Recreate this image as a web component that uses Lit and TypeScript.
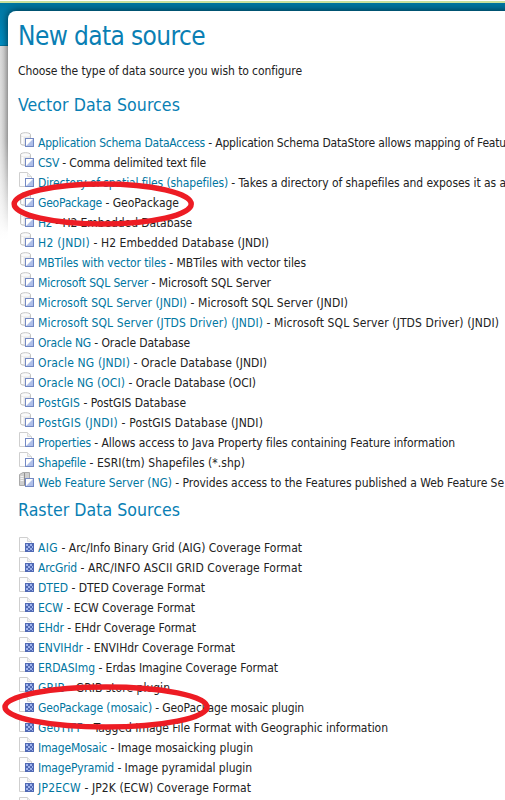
import { LitElement, html, css, svg } from "lit";
import { customElement, property } from "lit/decorators.js";

type Kind = "db" | "page" | "server" | "raster";
// kind, link name, description, right edge of the link, right edge of the description
type Row = [Kind, string, string, number, number];

const VECTOR: Row[] = [
  ["db", "Application Schema DataAccess", "Application Schema DataStore allows mapping of Featu", 205, 506],
  ["db", "CSV", "Comma delimited text file", 59, 206],
  ["page", "Directory of spatial files (shapefiles)", "Takes a directory of shapefiles and exposes it as a", 228, 506],
  ["db", "GeoPackage", "GeoPackage", 102, 179],
  ["db", "H2", "H2 Embedded Database", 52, 192],
  ["db", "H2 (JNDI)", "H2 Embedded Database (JNDI)", 90, 269],
  ["db", "MBTiles with vector tiles", "MBTiles with vector tiles", 166, 306],
  ["db", "Microsoft SQL Server", "Microsoft SQL Server", 148, 271],
  ["db", "Microsoft SQL Server (JNDI)", "Microsoft SQL Server (JNDI)", 187, 348],
  ["db", "Microsoft SQL Server (JTDS Driver) (JNDI)", "Microsoft SQL Server (JTDS Driver) (JNDI)", 263, 499],
  ["db", "Oracle NG", "Oracle Database", 91, 190],
  ["db", "Oracle NG (JNDI)", "Oracle Database (JNDI)", 130, 267],
  ["db", "Oracle NG (OCI)", "Oracle Database (OCI)", 125, 256],
  ["db", "PostGIS", "PostGIS Database", 80, 186],
  ["db", "PostGIS (JNDI)", "PostGIS Database (JNDI)", 118, 263],
  ["page", "Properties", "Allows access to Java Property files containing Feature information", 91, 455],
  ["page", "Shapefile", "ESRI(tm) Shapefiles (*.shp)", 86, 245],
  ["server", "Web Feature Server (NG)", "Provides access to the Features published a Web Feature Se", 172, 504],
];
const RASTER: Row[] = [
  ["raster", "AIG", "Arc/Info Binary Grid (AIG) Coverage Format", 58, 302],
  ["raster", "ArcGrid", "ARC/INFO ASCII GRID Coverage Format", 77, 302],
  ["raster", "DTED", "DTED Coverage Format", 68, 205],
  ["raster", "ECW", "ECW Coverage Format", 63, 195],
  ["raster", "EHdr", "EHdr Coverage Format", 64, 196],
  ["raster", "ENVIHdr", "ENVIHdr Coverage Format", 83, 235],
  ["raster", "ERDASImg", "Erdas Imagine Coverage Format", 95, 278],
  ["raster", "GRIB", "GRIB store plugin", 65, 170],
  ["raster", "GeoPackage (mosaic)", "GeoPackage mosaic plugin", 152, 304],
  ["raster", "GeoTIFF", "Tagged Image File Format with Geographic information", 83, 388],
  ["raster", "ImageMosaic", "Image mosaicking plugin", 107, 253],
  ["raster", "ImagePyramid", "Image pyramidal plugin", 114, 252],
  ["raster", "JP2ECW", "JP2K (ECW) Coverage Format", 81, 251],
];

/* One run of text whose tracking is adjusted to fill a given width. */
@customElement("fit-text")
class FitText extends LitElement {
  @property() text = "";
  @property({ type: Number }) width = 0;
  static styles = css`
    :host { display: inline-block; white-space: pre; }
  `;
  render() { return html`<span>${this.text}</span>`; }
  updated() {
    const s = this.renderRoot.querySelector("span")!;
    s.style.letterSpacing = "0";
    const w = s.getBoundingClientRect().width;
    s.style.letterSpacing = (this.width - w) / this.text.length + "px";
  }
}

@customElement("source-icon")
class SourceIcon extends LitElement {
  @property() kind: Kind = "db";
  static styles = css`
    :host { display: block; width: 16px; height: 16px; }
    svg { display: block; }
  `;
  render() {
    const page = svg`<path d="M.5 .5H8.5L12.5 4.5V14.5H.5Z" fill="#fdfdfd" stroke="#cfcfcf"/><path d="M8.5 .5V4.5H12.5" fill="#f1f1f1" stroke="#dadada"/>`;
    const db = svg`<path d="M1.5 2.5C1.5 .2 11.5 .2 11.5 2.5V11.5C11.5 14 1.5 14 1.5 11.5Z" fill="#e6e6e6" stroke="#c3c3c3"/><ellipse cx="6.5" cy="2.9" rx="4.4" ry="1.7" fill="#fafafa"/><path d="M3.5 5V12" stroke="#fff" stroke-width="2"/>`;
    const server = svg`<path d="M.5 2.5L4 .5H10.5V12.5L8 13.5H.5Z" fill="#cfcfcf" stroke="#aaa"/><path d="M5.5 1V13" stroke="#909090"/><path d="M1.5 4.5H4.5M1.5 6.5H4.5M1.5 8.5H4.5" stroke="#f5f5f5"/>`;
    const vec = svg`<rect x="6.5" y="6.5" width="8" height="8" fill="#fff" stroke="#7288c4"/><path d="M14 7V14H7Z" fill="#afbfe8"/>`;
    const ras = svg`<rect x="6" y="6" width="9" height="9" fill="#5069b4"/><path d="M7 7h2v2h-2zM11 7h2v2h-2zM9 9h2v2h-2zM13 9h1v2h-1zM7 11h2v2h-2zM11 11h2v2h-2zM9 13h2v1h-2zM13 13h1v1h-1z" fill="#9db2ea"/>`;
    const base = this.kind === "db" ? db : this.kind === "server" ? server : page;
    return html`<svg width="16" height="16" viewBox="0 0 16 16">${base}${this.kind === "raster" ? ras : vec}</svg>`;
  }
}

@customElement("app-root")
class AppRoot extends LitElement {
  static styles = css`
    :host {
      display: block; position: relative; width: 505px; height: 800px; overflow: hidden;
      background: #fff; color: #222;
      font: 12px/20px "DejaVu Sans Condensed", "DejaVu Sans", sans-serif;
      font-stretch: condensed;
    }
    .header {
      height: 46px; box-sizing: border-box; border-top: 1px solid #fff; border-bottom: 1px solid #0076a1;
      background: linear-gradient(#c9df9b 2px, #0076a1 2px, #008fc4);
    }
    .fade { height: 194px; width: 12px; background: linear-gradient(#dedede, #e6e6e6 50%, #fff); }
    .card {
      position: absolute; left: 8px; top: 11px; width: 520px; height: 820px; box-sizing: border-box;
      padding: 10px 0 0 10px; background: #fff; border-top-left-radius: 8px;
    }
    .glowbox {
      position: absolute; inset: 3px 0 auto 0; height: 230px; overflow: hidden;
      mask-image: linear-gradient(#000 60%, transparent);
    }
    .glow {
      position: absolute; left: 8px; top: 8px; width: 520px; height: 300px; border-top-left-radius: 8px;
      box-shadow: 0 0 9px rgba(0,0,0,.7);
    }
    h1, h2, p { margin: 0; font-weight: 400; }
    h1, h2 { color: #0a7fb4; }
    h1 { font-size: 26px; line-height: 30px; }
    p { margin-top: 10px; }
    h2 { font-size: 17.6px; line-height: 24px; margin-top: 12px; }
    h2.second { margin-top: 5px; }
    .list { margin-top: 16px; }
    .row { display: flex; height: 20px; white-space: pre; }
    source-icon { margin: -1px 3px 0 1px; flex: none; }
    .link { color: #0076a1; }
    .marks { position: absolute; left: 0; top: 0; }
  `;
  list(rows: Row[]) {
    return html`<div class="list">${rows.map(([k, a, b, x1, x2]) => html`
      <div class="row"><source-icon .kind=${k}></source-icon><fit-text class="link" .text=${a} .width=${x1 - 38}></fit-text><fit-text .text=${" - " + b} .width=${x2 - x1}></fit-text></div>`)}</div>`;
  }
  render() {
    return html`
      <div class="header"></div>
      <div class="fade"></div>
      <div class="glowbox"><div class="glow"></div></div>
      <div class="card">
        <h1><fit-text .text=${"New data source"} .width=${187}></fit-text></h1>
        <p><fit-text .text=${"Choose the type of data source you wish to configure"} .width=${284}></fit-text></p>
        <h2><fit-text .text=${"Vector Data Sources"} .width=${162}></fit-text></h2>
        ${this.list(VECTOR)}
        <h2 class="second"><fit-text .text=${"Raster Data Sources"} .width=${162}></fit-text></h2>
        ${this.list(RASTER)}
        <source-icon class="next" .kind=${"raster"}></source-icon>
      </div>
      <svg class="marks" width="505" height="800" fill="none" stroke="#ed1c24" stroke-width="5.5">
        <ellipse cx="102.7" cy="204" rx="88.5" ry="20"/>
        <ellipse cx="106" cy="707" rx="101" ry="20"/>
      </svg>`;
  }
}
